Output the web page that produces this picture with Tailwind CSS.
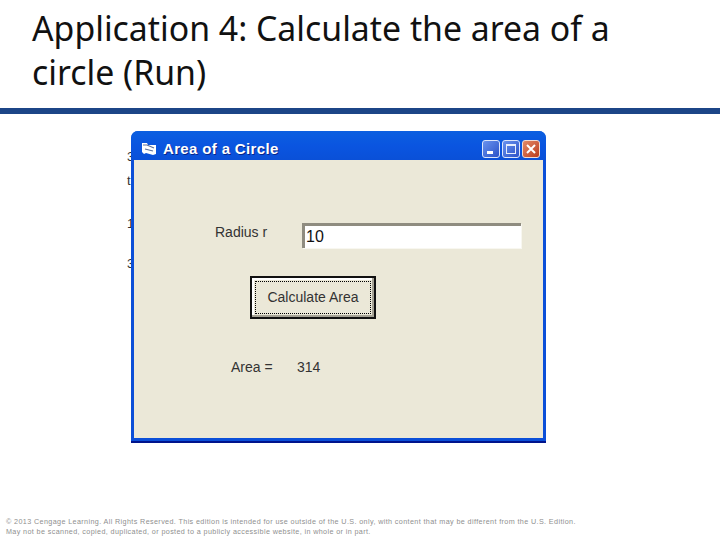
<!DOCTYPE html>
<html lang="en">
<head>
    <meta charset="UTF-8">
    <title>Application 4: Calculate the area of a circle (Run)</title>
    <script src="https://cdn.jsdelivr.net/npm/@tailwindcss/browser@4"></script>
</head>
<body class="bg-white">
    <div class="w-[720px] h-[540px] overflow-hidden flex flex-col">
        <!-- Slide title -->
        <h1 class="h-[108px] pl-[32px] pt-[6px] text-[33.8px] leading-[44px] text-[#111] font-['Noto_Sans',sans-serif]">Application 4: Calculate the area of a<br>circle (Run)</h1>
        <div class="h-[6px] bg-[#1c4587]"></div>

        <!-- Slide body -->
        <div class="relative h-[397px] pl-[131px] pt-[17px]">
            <!-- bits of text hidden behind the window -->
            <span class="absolute left-[127px] top-[36px] text-[13px] leading-none text-[#333] font-['Liberation_Sans',sans-serif]">3</span>
            <span class="absolute left-[127px] top-[60px] text-[13px] leading-none text-[#333] font-['Liberation_Sans',sans-serif]">t</span>
            <span class="absolute left-[127px] top-[103px] text-[13px] leading-none text-[#333] font-['Liberation_Sans',sans-serif]">1</span>
            <span class="absolute left-[127px] top-[143px] text-[13px] leading-none text-[#333] font-['Liberation_Sans',sans-serif]">3</span>

            <!-- XP window -->
            <div class="relative w-[415px] h-[312px] flex flex-col rounded-t-[7px] bg-[#0b4fd8] border-b-2 border-[#00148c] font-['Liberation_Sans',sans-serif]">
                <div class="h-[29px] flex items-center pl-[10px] pr-[6px] pt-[7px] rounded-t-[7px] bg-gradient-to-b from-[#0c5fe0] via-[#0a55e0] to-[#0a50d8]">
                    <svg width="16" height="14" viewBox="0 0 16 14" class="mr-[6px]">
                        <path d="M1 1 L6 1 L7 3 L15 3 L15 12 L12 13 L5 11 L3 12 L1 10 Z" fill="#fff"/>
                        <path d="M2 3 L6 3 L13 6 M4 7 L12 9" fill="none" stroke="#5b6f9c" stroke-width="1.2"/>
                    </svg>
                    <span class="text-[15px] tracking-[0.35px] font-bold text-white [text-shadow:1px_1px_0_#08268a]">Area of a Circle</span>
                    <div class="ml-auto flex gap-[2px]">
                        <div class="w-[18px] h-[18px] rounded-[3px] border border-[#dce6fb] bg-gradient-to-br from-[#6a92ee] to-[#2c52c8] flex items-end pl-[4px] pb-[3px]">
                            <div class="w-[6px] h-[3px] bg-white"></div>
                        </div>
                        <div class="w-[18px] h-[18px] rounded-[3px] border border-[#dce6fb] bg-gradient-to-br from-[#6a92ee] to-[#2c52c8] flex items-center justify-center">
                            <div class="w-[10px] h-[10px] border border-t-[2px] border-[#e6eefc]"></div>
                        </div>
                        <div class="w-[18px] h-[18px] rounded-[3px] border border-[#f0dcd4] bg-gradient-to-br from-[#e28a68] to-[#bb3a1a] flex items-center justify-center">
                            <svg width="10" height="10" viewBox="0 0 10 10"><path d="M1 1 L9 9 M9 1 L1 9" stroke="#fff" stroke-width="2"/></svg>
                        </div>
                    </div>
                </div>

                <!-- Form area -->
                <div class="mx-[3px] h-[278px] bg-[#ebe8d8] text-[#333] text-[14px] flex flex-col">
                    <div class="flex items-center h-[25px] mt-[63px]">
                        <span class="ml-[81px] w-[87px] -mt-[6px]">Radius r</span>
                        <div class="w-[219px] h-[25px] pl-[1px] pt-[2px] bg-white border-t-[3px] border-l-[3px] border-[#8f8c80] text-[16px] leading-[18px] text-[#111] shadow-[1px_1px_0_#f8f7f0]">10</div>
                    </div>
                    <div class="ml-[116px] mt-[28px] w-[126px] h-[43px] p-[3px] border-2 border-[#111] bg-[#ebe8d8] shadow-[inset_-2px_-2px_0_#a6a396,inset_2px_2px_0_#fff]">
                        <div class="h-full border border-dotted border-black flex items-center justify-center">Calculate Area</div>
                    </div>
                    <div class="flex mt-[39px] ml-[97px] h-[18px] items-center">
                        <span class="w-[66px]">Area =</span>
                        <span>314</span>
                    </div>
                </div>
            </div>
        </div>

        <!-- Copyright footer -->
        <p class="h-[29px] pl-[6px] pt-[6px] text-[7.2px] leading-[10px] tracking-[0.38px] text-[#8f8f8f] font-['Liberation_Sans',sans-serif]">© 2013 Cengage Learning. All Rights Reserved. This edition is intended for use outside of the U.S. only, with content that may be different from the U.S. Edition.<br>May not be scanned, copied, duplicated, or posted to a publicly accessible website, in whole or in part.</p>
    </div>
</body>
</html>
